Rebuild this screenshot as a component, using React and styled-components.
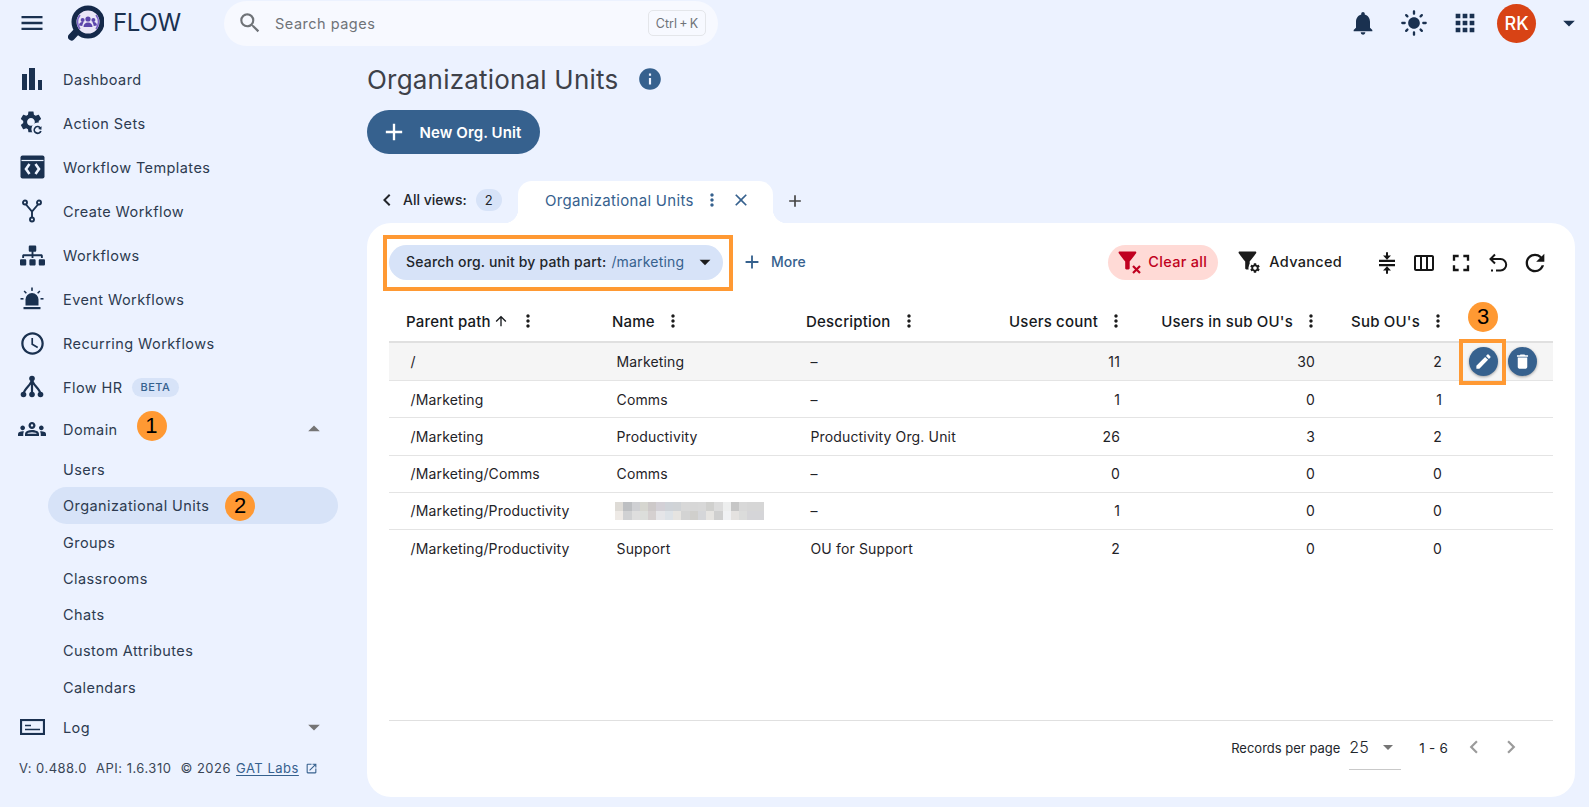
import React from "react";
import styled, { createGlobalStyle } from "styled-components";
import {
  MdMenu,
  MdSearch,
  MdOutlineAccessTime,
  MdOutlineGroups,
  MdNotifications,
  MdLightMode,
  MdApps,
  MdInfo,
  MdAdd,
  MdChevronLeft,
  MdChevronRight,
  MdClose,
  MdMoreVert,
  MdArrowDropDown,
  MdArrowDropUp,
  MdArrowUpward,
  MdEdit,
  MdDelete,
  MdFullscreen,
  MdRefresh,
  MdOpenInNew,
  MdOutlineViewWeek,
} from "react-icons/md";
import { FaSitemap } from "react-icons/fa";

const INK = "#1a3150";
const PRIMARY = "#36618e";
const CHIP = "#d7e3f8";
const ORANGE = "#ff9933";

const GEAR =
  "M19.14 12.94c.04-.3.06-.61.06-.94 0-.32-.02-.64-.07-.94l2.03-1.58c.18-.14.23-.41.12-.61l-1.92-3.32c-.12-.22-.37-.29-.59-.22l-2.39.96c-.5-.38-1.03-.7-1.62-.94l-.36-2.54c-.04-.24-.24-.41-.48-.41h-3.84c-.24 0-.43.17-.47.41l-.36 2.54c-.59.24-1.13.57-1.62.94l-2.39-.96c-.22-.08-.47 0-.59.22L2.74 8.87c-.12.21-.08.47.12.61l2.03 1.58c-.05.3-.09.63-.09.94s.02.64.07.94l-2.03 1.58c-.18.14-.23.41-.12.61l1.92 3.32c.12.22.37.29.59.22l2.39-.96c.5.38 1.03.7 1.62.94l.36 2.54c.05.24.24.41.48.41h3.84c.24 0 .44-.17.47-.41l.36-2.54c.59-.24 1.13-.56 1.62-.94l2.39.96c.22.08.47 0 .59-.22l1.92-3.32c.12-.22.07-.47-.12-.61l-2.01-1.58zM12 15.6c-1.98 0-3.6-1.62-3.6-3.6s1.62-3.6 3.6-3.6 3.6 1.62 3.6 3.6-1.62 3.6-3.6 3.6z";
const FUNNEL =
  "M4.25 5.61C6.27 8.2 10 13 10 13v6c0 .55.45 1 1 1h2c.55 0 1-.45 1-1v-6s3.72-4.8 5.74-7.39c.51-.66.04-1.61-.79-1.61H5.04c-.83 0-1.3.95-.79 1.61z";

const GlobalStyle = createGlobalStyle`
  html, body {
    margin: 0;
    height: 100%;
    background: #ecf2ff;
    font-family: Inter, "Noto Sans", sans-serif;
    color: #191c20;
  }
  * {
    box-sizing: border-box;
  }
`;

const Shell = styled.div`
  height: 807px;
  display: flex;
  flex-direction: column;
  overflow: hidden;
  background: #ecf2ff;
`;

/* top bar */

const TopBar = styled.header`
  height: 46px;
  flex: none;
  display: flex;
  align-items: center;
  padding-left: 18px;
  padding-right: 18px;
  color: ${INK};
`;

const LogoWrap = styled.div`
  display: flex;
  align-items: center;
  margin-left: 22px;
  width: 156px;
`;

const LogoText = styled.span`
  font-size: 24px;
  line-height: 30px;
  margin-left: 9px;
  letter-spacing: -0.3px;
  color: ${INK};
`;

const SearchBar = styled.div`
  width: 494px;
  height: 45px;
  display: flex;
  align-items: center;
  padding: 0 12px 0 13px;
  border-radius: 23px;
  background: #f7f9ff;
`;

const SearchText = styled.span`
  flex: 1;
  margin-left: 12px;
  font-size: 14.5px;
  color: #6f7378;
  letter-spacing: 0.5px;
`;

const Shortcut = styled.span`
  width: 58px;
  height: 26px;
  display: flex;
  align-items: center;
  justify-content: center;
  border: 1px solid #e4e6ea;
  border-radius: 5px;
  font-size: 12.5px;
  color: #6f7378;
`;

const TopActions = styled.div`
  margin-left: auto;
  display: flex;
  align-items: center;
  gap: 23px;
  color: ${INK};
`;

const Avatar = styled.div`
  width: 39px;
  height: 39px;
  margin-left: -5px;
  border-radius: 50%;
  background: #d84315;
  color: #fff;
  display: flex;
  align-items: center;
  justify-content: center;
  font-size: 18px;
  font-weight: 500;
`;

const AvatarCaret = styled(MdArrowDropDown)`
  margin-left: -4px;
  margin-right: -12px;
  color: ${INK};
`;

/* sidebar */

const Body = styled.div`
  flex: 1;
  min-height: 0;
  display: flex;
`;

const Sidebar = styled.aside`
  width: 367px;
  flex: none;
  padding-top: 11px;
  display: flex;
  flex-direction: column;
`;

const NavItem = styled.div`
  height: ${(p) => p.$height || 44}px;
  margin-top: ${(p) => p.$top || 0}px;
  display: flex;
  align-items: center;
  padding-left: 18px;
  padding-right: 39px;
  font-size: 14.5px;
  letter-spacing: 0.42px;
  color: #2d3b50;
`;

const NavIcon = styled.span`
  width: 28px;
  height: 28px;
  margin-right: 17px;
  display: flex;
  align-items: center;
  justify-content: center;
  color: ${INK};
`;

const Beta = styled.span`
  margin-left: 9px;
  padding: 0 9px;
  height: 19px;
  display: flex;
  align-items: center;
  border-radius: 10px;
  background: ${CHIP};
  color: ${PRIMARY};
  font-size: 11px;
  font-weight: 500;
  letter-spacing: 0.5px;
`;

const Expander = styled.span`
  margin-left: auto;
  display: flex;
  color: #757575;
`;

const SubItem = styled.div`
  height: ${(p) => (p.$active ? 37 : 36.2)}px;
  margin: 0 29px 0 48px;
  padding-left: 15px;
  display: flex;
  align-items: center;
  border-radius: 19px;
  background: ${(p) => (p.$active ? CHIP : "transparent")};
  font-size: 14.5px;
  letter-spacing: 0.42px;
  color: #2d3b50;
`;

const StepBadge = styled.span`
  width: 30px;
  height: 30px;
  flex: none;
  border-radius: 50%;
  background: ${ORANGE};
  color: #000;
  display: flex;
  align-items: center;
  justify-content: center;
  font-family: "Liberation Sans", Arial, sans-serif;
  font-size: 22px;
  margin-left: ${(p) => p.$left}px;
  margin-bottom: ${(p) => p.$lift || 0}px;
`;

const Version = styled.div`
  margin-top: 12px;
  padding-left: 19px;
  display: flex;
  align-items: center;
  gap: 9px;
  font-size: 13px;
  letter-spacing: 0.5px;
  color: #3a4656;
`;

const VersionLink = styled.span`
  display: flex;
  align-items: center;
  gap: 6px;
  margin-left: -4px;
  color: ${PRIMARY};

  u {
    text-underline-offset: 2px;
  }
`;

/* main column */

const Main = styled.main`
  flex: 1;
  min-width: 0;
  display: flex;
  flex-direction: column;
  padding: 0 14px 10px 0;
`;

const TitleRow = styled.div`
  display: flex;
  align-items: center;
  height: 30px;
  margin-top: 18px;
`;

const Title = styled.h1`
  margin: 0;
  font-size: 26px;
  font-weight: 400;
  letter-spacing: 0.2px;
  color: #3e4149;
`;

const InfoIcon = styled(MdInfo)`
  margin-left: 19px;
  color: ${PRIMARY};
`;

const PrimaryButton = styled.button`
  width: 173px;
  height: 44px;
  margin-top: 16px;
  padding: 0 0 0 13px;
  display: flex;
  align-items: center;
  gap: 11.5px;
  border: none;
  border-radius: 22px;
  background: ${PRIMARY};
  color: #fff;
  font-family: inherit;
  font-size: 15px;
  font-weight: 600;
  letter-spacing: 0.1px;
`;

const TabRow = styled.div`
  height: 42px;
  margin-top: 27px;
  display: flex;
  align-items: center;
`;

const AllViews = styled.div`
  width: 151px;
  display: flex;
  align-items: center;
  padding: 0 0 5px 8px;
  font-size: 14px;
  font-weight: 500;
  color: #23262b;

  svg {
    margin-right: 4px;
  }
`;

const ViewCount = styled.span`
  width: 26px;
  height: 22px;
  margin-left: 9px;
  border-radius: 11px;
  background: ${CHIP};
  display: flex;
  align-items: center;
  justify-content: center;
  font-size: 13px;
  font-weight: 400;
`;

const Tab = styled.div`
  position: relative;
  width: 255px;
  height: 42px;
  display: flex;
  align-items: center;
  padding: 0 0 4px 27px;
  background: #fff;
  border-radius: 14px 14px 0 0;
  color: ${PRIMARY};
  font-size: 15px;
  letter-spacing: 0.3px;

  &::before,
  &::after {
    content: "";
    position: absolute;
    bottom: 0;
    width: 14px;
    height: 14px;
  }
  &::before {
    left: -14px;
    background: radial-gradient(circle at 0 0, transparent 14px, #fff 14.5px);
  }
  &::after {
    right: -14px;
    background: radial-gradient(circle at 100% 0, transparent 14px, #fff 14.5px);
  }
`;

const TabDots = styled(MdMoreVert)`
  margin-left: 8px;
  color: ${PRIMARY};
`;

const TabClose = styled(MdClose)`
  margin-left: 9px;
  color: ${PRIMARY};
`;

const TabAdd = styled(MdAdd)`
  margin: 0 0 2px 12px;
  color: #444;
`;

const Panel = styled.section`
  flex: 1;
  min-height: 0;
  display: flex;
  flex-direction: column;
  padding: 12px 22px 0;
  background: #fff;
  border-radius: 24px;
`;

const Toolbar = styled.div`
  display: flex;
  align-items: center;
  height: 56px;
  flex: none;
`;

const Highlight = styled.div`
  margin-left: -6px;
  padding: 0 6px 2px 2px;
  border: 4px solid ${ORANGE};
  height: 56px;
  display: flex;
  align-items: center;
`;

const FilterChip = styled.div`
  width: 334px;
  height: 35px;
  display: flex;
  align-items: center;
  padding: 0 5px 1px 17px;
  border-radius: 18px;
  background: ${CHIP};
  font-size: 14px;
  font-weight: 450;
  letter-spacing: 0.18px;
  color: #22262b;
  white-space: nowrap;

  em {
    margin-left: 5px;
    font-style: normal;
    font-weight: 400;
    color: ${PRIMARY};
  }

  svg {
    margin-left: auto;
    color: #1c1c1c;
  }
`;

const MoreButton = styled.div`
  margin: 0 0 3px 8px;
  display: flex;
  align-items: center;
  gap: 8px;
  color: ${PRIMARY};
  font-size: 14px;
  font-weight: 500;
`;

const ToolbarEnd = styled.div`
  margin-left: auto;
  display: flex;
  align-items: center;
`;

const ClearAll = styled.div`
  width: 110px;
  height: 35px;
  margin-bottom: 2px;
  display: flex;
  align-items: center;
  padding: 0 0 1px 8px;
  gap: 6px;
  border-radius: 18px;
  background: #ffdad6;
  color: #c00020;
  font-size: 14.5px;
  font-weight: 500;
  letter-spacing: 0.3px;
`;

const Advanced = styled.div`
  margin: 0 26px 3px 18px;
  display: flex;
  align-items: center;
  gap: 7px;
  color: #1b1b1b;
  font-size: 14.5px;
  font-weight: 500;
  letter-spacing: 0.3px;
`;

const TableTool = styled.span`
  width: 37px;
  display: flex;
  justify-content: center;
  color: #151515;
`;

/* table */

const Table = styled.div`
  flex: 1;
  min-height: 0;
  border-bottom: 1px solid #e0e0e0;
`;

const COLUMNS = "206px 194px 180px 166px 195px 127px 96px";

const HeadRow = styled.div`
  display: grid;
  grid-template-columns: ${COLUMNS};
  height: 52px;
  padding-top: 10px;
  align-items: center;
  border-bottom: 2px solid #e0e0e0;
`;

const HeadCell = styled.div`
  display: flex;
  align-items: center;
  justify-content: ${(p) => (p.$right ? "flex-end" : "flex-start")};
  padding: ${(p) => (p.$right ? "0 9px 0 0" : "0 0 0 17px")};
  font-size: 15px;
  font-weight: 500;
  letter-spacing: 0.2px;
  color: #16191d;
  white-space: nowrap;

  svg.sort {
    margin-left: 2px;
  }
`;

const HeadDots = styled(MdMoreVert)`
  margin-left: ${(p) => p.$gap || 8}px;
  color: #1b1b1b;
`;

const Row = styled.div`
  display: grid;
  grid-template-columns: ${COLUMNS};
  height: ${(p) => (p.$first ? 38 : 37.25)}px;
  align-items: center;
  border-bottom: ${(p) => (p.$last ? "none" : "1px solid #e4e4e4")};
  background: ${(p) => (p.$first ? "#f5f5f5" : "transparent")};
`;

const Cell = styled.div`
  padding: ${(p) => (p.$right ? "0 15px 0 0" : "0 0 0 21.5px")};
  text-align: ${(p) => (p.$right ? "right" : "left")};
  font-size: 14px;
  letter-spacing: 0.15px;
  color: #1f2328;
  white-space: nowrap;
`;

const ActionCell = styled.div`
  display: flex;
  align-items: center;
  gap: 9.5px;
  padding-left: 12px;
`;

const RoundAction = styled.button`
  position: relative;
  width: 29px;
  height: 29px;
  padding: 0;
  border: none;
  border-radius: 50%;
  background: ${PRIMARY};
  color: #fff;
  display: flex;
  align-items: center;
  justify-content: center;
  box-shadow: 0 1px 3px rgba(0, 0, 0, 0.35);

  &::after {
    content: ${(p) => (p.$marked ? '""' : "none")};
    position: absolute;
    inset: -8.5px -8px -8.5px -10px;
    border: 4px solid ${ORANGE};
  }
`;

const Pixelated = styled.svg`
  display: block;
  margin-left: -2px;
`;

/* footer */

const Footer = styled.footer`
  height: 76px;
  flex: none;
  display: flex;
  align-items: flex-start;
  justify-content: flex-end;
  padding-top: 13px;
  padding-right: 29px;
  font-size: 13px;
  color: #22262b;
`;

const FooterLabel = styled.span`
  line-height: 28px;
`;

const PageSize = styled.div`
  width: 52px;
  height: 36px;
  margin-left: 9px;
  display: flex;
  align-items: flex-start;
  justify-content: space-between;
  border-bottom: 1px solid #c9c9c9;
  font-size: 16px;
  line-height: 26px;
  font-weight: 300;

  svg {
    margin: 1px 1px 0 0;
    color: #757575;
  }
`;

const PageRange = styled.span`
  margin-left: 18px;
  line-height: 28px;
  font-size: 13.5px;
  letter-spacing: 0.2px;
`;

const Pager = styled.div`
  margin-left: 13px;
  display: flex;
  gap: 11px;
  color: #9b9b9b;
`;

/* drawn icons */

const BrandMark = () => (
  <svg width="36" height="38" viewBox="0 0 36 38">
    <path d="M11 25 L3.5 33" stroke="#14294a" strokeWidth="7" strokeLinecap="round" />
    <circle cx="20" cy="18" r="14" fill="#e9e6f7" stroke="#14294a" strokeWidth="5" />
    <g fill="#5b45ab">
      <circle cx="20" cy="15" r="2.6" />
      <circle cx="14.6" cy="16" r="2" />
      <circle cx="25.4" cy="16" r="2" />
      <path d="M15.5 23c0-3 2-4.6 4.5-4.6s4.5 1.6 4.5 4.6zM11 21.5c0-2 1.4-3.4 3.2-3.4.6 0 1 .1 1.4.3-.8 1-1.3 2.2-1.3 3.7zM29 21.5c0-2-1.4-3.4-3.2-3.4-.6 0-1 .1-1.4.3.8 1 1.3 2.2 1.3 3.7z" />
    </g>
    <path d="M12 11 a11 11 0 0 0 0 14 M28 11 a11 11 0 0 1 0 14" fill="none" stroke="#7a62c4" strokeWidth="1.6" />
  </svg>
);

const BarsIcon = () => (
  <svg width="20" height="22" viewBox="0 0 20 22" fill="currentColor">
    <rect x="0" y="6" width="5" height="16" />
    <rect x="7" y="0" width="6" height="22" />
    <rect x="16" y="12" width="4" height="10" />
  </svg>
);

const ActionSetsIcon = () => (
  <svg width="24" height="24" viewBox="0 0 24 24" fill="currentColor">
    <path transform="translate(-2 -2) scale(1.08)" d={GEAR} />
    <circle cx="18" cy="18" r="6.6" fill="#ecf2ff" />
    <path d="M21.6 15.3l-.2 3.4-3.2-.7 1.1-1a2.5 2.5 0 1 0 .7 2.7l1.7.5a4.2 4.2 0 1 1-1.2-4.3z" />
  </svg>
);

const TemplateIcon = () => (
  <svg width="25" height="24" viewBox="0 0 25 24">
    <rect x="0.5" y="0.5" width="24" height="23" rx="2" fill="currentColor" />
    <path d="M1.5 5.5h22" stroke="#ecf2ff" strokeWidth="1.2" />
    <path d="M9.5 9L6 14l3.5 5M15.5 9L19 14l-3.5 5" fill="none" stroke="#ecf2ff" strokeWidth="2.6" />
  </svg>
);

const ForkIcon = () => (
  <svg width="22" height="24" viewBox="0 0 22 24" fill="none" stroke="currentColor" strokeWidth="1.9">
    <circle cx="4" cy="3.5" r="2" />
    <circle cx="18" cy="3.5" r="2" />
    <circle cx="11" cy="20.5" r="2" />
    <path d="M5 5.5l6 7 6-7M11 12.5v6" />
  </svg>
);

const SirenIcon = () => (
  <svg width="24" height="25" viewBox="0 0 24 25" fill="currentColor">
    <path d="M5.5 18.5v-6a6.5 6.5 0 0 1 13 0v6z" />
    <rect x="3.5" y="20" width="17" height="2.2" />
    <rect x="11.2" y="0.5" width="1.6" height="3.4" />
    <rect x="0.5" y="11" width="3" height="1.6" />
    <rect x="20.5" y="11" width="3" height="1.6" />
    <path d="M3.6 4.6l1.1-1.1 2.2 2.2-1.1 1.1zM20.4 4.6l-1.1-1.1-2.2 2.2 1.1 1.1z" />
  </svg>
);

const TreeIcon = () => (
  <svg width="24" height="24" viewBox="0 0 24 24" fill="none" stroke="currentColor" strokeWidth="2.2">
    <path d="M12 4c0 6-8 9-8.5 15M12 4c0 6 8 9 8.5 15M12 4v15" />
    <g fill="currentColor" stroke="none">
      <circle cx="12" cy="3.5" r="2.8" />
      <circle cx="3.5" cy="19.5" r="2.8" />
      <circle cx="12" cy="19.5" r="2.8" />
      <circle cx="20.5" cy="19.5" r="2.8" />
    </g>
  </svg>
);

const LogIcon = () => (
  <svg width="25" height="16" viewBox="0 0 25 16" fill="none" stroke="currentColor">
    <rect x="1" y="1" width="23" height="14" strokeWidth="2.2" />
    <path d="M5 6.5h6M5 10.5h15" strokeWidth="1.5" />
  </svg>
);

const ClearFilterIcon = () => (
  <svg width="26" height="26" viewBox="0 0 26 26" fill="currentColor">
    <path transform="translate(-2 -2) scale(1.12)" d={FUNNEL} />
    <path d="M17 17l7 7M24 17l-7 7" fill="none" stroke="currentColor" strokeWidth="2.2" />
  </svg>
);

const AdvancedFilterIcon = () => (
  <svg width="26" height="26" viewBox="0 0 26 26" fill="currentColor">
    <path transform="translate(-2 -2) scale(1.12)" d={FUNNEL} />
    <circle cx="19" cy="19" r="6.6" fill="#fff" />
    <path transform="translate(13 13) scale(.5)" d={GEAR} />
  </svg>
);

const CompressIcon = () => (
  <svg width="24" height="26" viewBox="0 0 24 24" fill="currentColor" preserveAspectRatio="none">
    <path d="M4 9v2h16V9H4zm16 6v-2H4v2h16zM11 22h2v-3h3l-4-4-4 4h3v3zm2-20h-2v3H8l4 4 4-4h-3V2z" />
  </svg>
);

const UndoIcon = () => (
  <svg width="22" height="24" viewBox="0 0 22 24" fill="none" stroke="currentColor" strokeWidth="2">
    <path d="M8 3.5L3.5 8 8 12.5M4 8h9.5a5.7 5.7 0 0 1 0 11.4H9" />
    <path d="M4 19.4h2" />
  </svg>
);

const BLUR_TOP = ["#dedbd6", "#bdbfc2", "#cfd0d3", "#d6d6d0", "#cdc9c9", "#d3d0d6", "#cfd3d8", "#d0d3d6", "#d8d8d8", "#d7d7d7", "#d8d8d8", "#d0d0ce", "#dcdcdc", "#edeeee", "#c6c6c6", "#d8d8d8", "#d6d6d6", "#d6d6d6"];
const BLUR_BOTTOM = ["#eeeae6", "#d0d1d3", "#dedede", "#dcdedb", "#d5d0d0", "#e5e5e8", "#dde2e7", "#e6e4e1", "#d3d3d3", "#d0cfcc", "#d5d6d9", "#e6e4e1", "#cfcfcf", "#f0f1f3", "#e4e2e0", "#dbdcdb", "#d5d5d8", "#d5d5d8"];

const BlurredName = () => (
  <Pixelated width="149" height="18" viewBox="0 0 149 18" shapeRendering="crispEdges">
    {BLUR_TOP.map((c, i) => (
      <rect key={`t${i}`} x={i * 8.28} y="0" width="8.4" height="9" fill={c} />
    ))}
    {BLUR_BOTTOM.map((c, i) => (
      <rect key={`b${i}`} x={i * 8.28} y="9" width="8.4" height="9" fill={c} />
    ))}
  </Pixelated>
);

const topNav = [
  { label: "Dashboard", icon: <BarsIcon /> },
  { label: "Action Sets", icon: <ActionSetsIcon /> },
  { label: "Workflow Templates", icon: <TemplateIcon /> },
  { label: "Create Workflow", icon: <ForkIcon /> },
  { label: "Workflows", icon: <FaSitemap size={25} /> },
  { label: "Event Workflows", icon: <SirenIcon /> },
  { label: "Recurring Workflows", icon: <MdOutlineAccessTime size={27} /> },
];

const domainNav = ["Users", "Organizational Units", "Groups", "Classrooms", "Chats", "Custom Attributes", "Calendars"];

const rows = [
  { path: "/", name: "Marketing", desc: "–", users: 11, sub: 30, ous: 2 },
  { path: "/Marketing", name: "Comms", desc: "–", users: 1, sub: 0, ous: 1 },
  { path: "/Marketing", name: "Productivity", desc: "Productivity Org. Unit", users: 26, sub: 3, ous: 2 },
  { path: "/Marketing/Comms", name: "Comms", desc: "–", users: 0, sub: 0, ous: 0 },
  { path: "/Marketing/Productivity", blurred: true, desc: "–", users: 1, sub: 0, ous: 0 },
  { path: "/Marketing/Productivity", name: "Support", desc: "OU for Support", users: 2, sub: 0, ous: 0 },
];

const App = () => (
  <Shell>
    <GlobalStyle />
    <TopBar>
      <MdMenu size={28} />
      <LogoWrap>
        <BrandMark />
        <LogoText>FLOW</LogoText>
      </LogoWrap>
      <SearchBar>
        <MdSearch size={26} color="#6f7378" />
        <SearchText>Search pages</SearchText>
        <Shortcut>Ctrl{"\u2009"}+{"\u2009"}K</Shortcut>
      </SearchBar>
      <TopActions>
        <MdNotifications size={28} />
        <MdLightMode size={28} />
        <MdApps size={28} />
        <Avatar>RK</Avatar>
        <AvatarCaret size={28} />
      </TopActions>
    </TopBar>

    <Body>
      <Sidebar>
        {topNav.map((item) => (
          <NavItem key={item.label}>
            <NavIcon>{item.icon}</NavIcon>
            {item.label}
          </NavItem>
        ))}
        <NavItem>
          <NavIcon>
            <TreeIcon />
          </NavIcon>
          Flow HR
          <Beta>BETA</Beta>
        </NavItem>
        <NavItem $top={-2}>
          <NavIcon>
            <MdOutlineGroups size={30} />
          </NavIcon>
          Domain
          <StepBadge $left={19} $lift={6}>1</StepBadge>
          <Expander>
            <MdArrowDropUp size={28} />
          </Expander>
        </NavItem>
        {domainNav.map((label) => (
          <SubItem key={label} $active={label === "Organizational Units"}>
            {label}
            {label === "Organizational Units" && <StepBadge $left={16}>2</StepBadge>}
          </SubItem>
        ))}
        <NavItem $height={42} $top={1}>
          <NavIcon>
            <LogIcon />
          </NavIcon>
          Log
          <Expander>
            <MdArrowDropDown size={28} />
          </Expander>
        </NavItem>
        <Version>
          <span>V: 0.488.0</span>
          <span>API: 1.6.310</span>
          <span>© 2026</span>
          <VersionLink>
            <u>GAT Labs</u>
            <MdOpenInNew size={13} />
          </VersionLink>
        </Version>
      </Sidebar>

      <Main>
        <TitleRow>
          <Title>Organizational Units</Title>
          <InfoIcon size={26} />
        </TitleRow>
        <PrimaryButton>
          <MdAdd size={28} />
          New Org. Unit
        </PrimaryButton>

        <TabRow>
          <AllViews>
            <MdChevronLeft size={24} />
            <span>All views:</span>
            <ViewCount>2</ViewCount>
          </AllViews>
          <Tab>
            Organizational Units
            <TabDots size={20} />
            <TabClose size={20} />
          </Tab>
          <TabAdd size={20} />
        </TabRow>

        <Panel>
          <Toolbar>
            <Highlight>
              <FilterChip>
                Search org. unit by path part:
                <em>/marketing</em>
                <MdArrowDropDown size={26} />
              </FilterChip>
            </Highlight>
            <MoreButton>
              <MdAdd size={22} />
              More
            </MoreButton>
            <ToolbarEnd>
              <ClearAll>
                <ClearFilterIcon />
                Clear all
              </ClearAll>
              <Advanced>
                <AdvancedFilterIcon />
                Advanced
              </Advanced>
              <TableTool>
                <CompressIcon />
              </TableTool>
              <TableTool>
                <MdOutlineViewWeek size={24} />
              </TableTool>
              <TableTool>
                <MdFullscreen size={28} />
              </TableTool>
              <TableTool>
                <UndoIcon />
              </TableTool>
              <TableTool>
                <MdRefresh size={28} />
              </TableTool>
            </ToolbarEnd>
          </Toolbar>

          <Table>
            <HeadRow>
              <HeadCell>
                Parent path
                <MdArrowUpward className="sort" size={16} />
                <HeadDots size={20} $gap={9} />
              </HeadCell>
              <HeadCell>
                Name
                <HeadDots size={20} />
              </HeadCell>
              <HeadCell>
                Description
                <HeadDots size={20} />
              </HeadCell>
              <HeadCell $right>
                Users count
                <HeadDots size={20} />
              </HeadCell>
              <HeadCell $right>
                Users in sub OU's
                <HeadDots size={20} />
              </HeadCell>
              <HeadCell $right>
                Sub OU's
                <HeadDots size={20} />
              </HeadCell>
              <StepBadge $left={11} $lift={8}>3</StepBadge>
            </HeadRow>
            {rows.map((row, i) => (
              <Row key={i} $first={i === 0} $last={i === rows.length - 1}>
                <Cell>{row.path}</Cell>
                <Cell>{row.blurred ? <BlurredName /> : row.name}</Cell>
                <Cell>{row.desc}</Cell>
                <Cell $right>{row.users}</Cell>
                <Cell $right>{row.sub}</Cell>
                <Cell $right>{row.ous}</Cell>
                {i === 0 && (
                  <ActionCell>
                    <RoundAction $marked>
                      <MdEdit size={19} />
                    </RoundAction>
                    <RoundAction>
                      <MdDelete size={19} />
                    </RoundAction>
                  </ActionCell>
                )}
              </Row>
            ))}
          </Table>

          <Footer>
            <FooterLabel>Records per page</FooterLabel>
            <PageSize>
              25
              <MdArrowDropDown size={24} />
            </PageSize>
            <PageRange>1 - 6</PageRange>
            <Pager>
              <MdChevronLeft size={26} />
              <MdChevronRight size={26} />
            </Pager>
          </Footer>
        </Panel>
      </Main>
    </Body>
  </Shell>
);

export default App;
